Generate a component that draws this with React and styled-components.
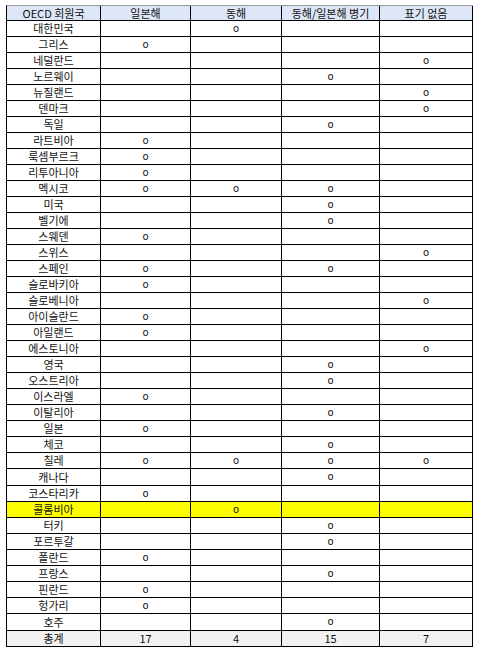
import React from "react";
import styled, { createGlobalStyle } from "styled-components";

const GlobalStyle = createGlobalStyle`
  body {
    margin: 0;
    background: #ffffff;
    font-family: "Noto Sans CJK KR", "Noto Sans", sans-serif;
  }
`;

const Page = styled.div`
  padding: 5px 6px;
`;

const Sheet = styled.div`
  display: grid;
  grid-template-columns: 94px 90px 91px 98px 93px;
  width: max-content;
  border-left: 1px solid #000000;
  border-top: 1px solid #9a9a9a;
  font-size: 11px;
  color: #111111;
`;

const HeadCell = styled.div`
  height: 14px;
  display: flex;
  align-items: center;
  justify-content: center;
  background: #dde6f6;
  border-right: 1px solid #000000;
  border-bottom: 1px solid #000000;
  white-space: nowrap;
  line-height: 14px;
`;

const Cell = styled.div`
  height: ${(p) => (p.tall ? 16 : 15)}px;
  display: flex;
  align-items: center;
  justify-content: center;
  background: ${(p) => (p.highlight ? "#ffff00" : p.total ? "#f2f2f2" : "#ffffff")};
  border-right: 1px solid #000000;
  border-bottom: 1px solid #000000;
  white-space: nowrap;
  line-height: 15px;
`;

const Mark = styled.span`
  font-family: "DejaVu Sans", sans-serif;
  font-size: 10px;
  line-height: 10px;
`;

const columns = ["OECD 회원국", "일본해", "동해", "동해/일본해 병기", "표기 없음"];

// flags: [일본해, 동해, 병기, 표기없음]
const rows = [
  ["대한민국", 0, 1, 0, 0],
  ["그리스", 1, 0, 0, 0],
  ["네덜란드", 0, 0, 0, 1],
  ["노르웨이", 0, 0, 1, 0],
  ["뉴질랜드", 0, 0, 0, 1],
  ["덴마크", 0, 0, 0, 1],
  ["독일", 0, 0, 1, 0],
  ["라트비아", 1, 0, 0, 0],
  ["룩셈부르크", 1, 0, 0, 0],
  ["리투아니아", 1, 0, 0, 0],
  ["멕시코", 1, 1, 1, 0],
  ["미국", 0, 0, 1, 0],
  ["벨기에", 0, 0, 1, 0],
  ["스웨덴", 1, 0, 0, 0],
  ["스위스", 0, 0, 0, 1],
  ["스페인", 1, 0, 1, 0],
  ["슬로바키아", 1, 0, 0, 0],
  ["슬로베니아", 0, 0, 0, 1],
  ["아이슬란드", 1, 0, 0, 0],
  ["아일랜드", 1, 0, 0, 0],
  ["에스토니아", 0, 0, 0, 1],
  ["영국", 0, 0, 1, 0],
  ["오스트리아", 0, 0, 1, 0],
  ["이스라엘", 1, 0, 0, 0],
  ["이탈리아", 0, 0, 1, 0],
  ["일본", 1, 0, 0, 0],
  ["체코", 0, 0, 1, 0],
  ["칠레", 1, 1, 1, 1],
  ["캐나다", 0, 0, 1, 0],
  ["코스타리카", 1, 0, 0, 0],
  ["콜롬비아", 0, 1, 0, 0, true],
  ["터키", 0, 0, 1, 0],
  ["포르투갈", 0, 0, 1, 0],
  ["폴란드", 1, 0, 0, 0],
  ["프랑스", 0, 0, 1, 0],
  ["핀란드", 1, 0, 0, 0],
  ["헝가리", 1, 0, 0, 0],
  ["호주", 0, 0, 1, 0],
];

const totals = ["총계", "17", "4", "15", "7"];

const App = () => {
  return (
    <Page>
      <GlobalStyle />
      <Sheet>
        {columns.map((c) => (
          <HeadCell key={c}>{c}</HeadCell>
        ))}
        {rows.map(([name, a, b, c, d, hl], r) => {
          const tall = r === 28 || r === 37;
          return (
            <React.Fragment key={name}>
              <Cell highlight={hl} tall={tall}>
                {name}
              </Cell>
              {[a, b, c, d].map((v, i) => (
                <Cell key={i} highlight={hl} tall={tall}>
                  {v ? <Mark>o</Mark> : null}
                </Cell>
              ))}
            </React.Fragment>
          );
        })}
        {totals.map((t, i) => (
          <Cell key={i} total>
            {t}
          </Cell>
        ))}
      </Sheet>
    </Page>
  );
};

export default App;
